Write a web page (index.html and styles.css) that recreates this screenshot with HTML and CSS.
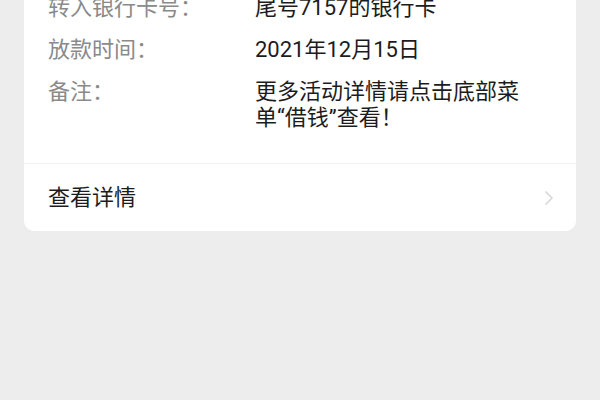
FILE: index.html
```html
<!DOCTYPE html>
<html lang="zh-CN">
<head>
<meta charset="utf-8">
<link rel="stylesheet" href="styles.css">
</head>
<body>
<div class="card">
  <div class="info">
    <div class="label">转入银行卡号：</div>
    <div class="value">尾号7157的银行卡</div>
    <div class="label">放款时间：</div>
    <div class="value">2021年12月15日</div>
    <div class="label">备注：</div>
    <div class="value">更多活动详情请点击底部菜单“借钱”查看！</div>
  </div>
  <div class="link">
    <span class="link-text">查看详情</span>
    <svg class="chev" width="10" height="16" viewBox="0 0 10 16"><path d="M1.5 1.5 L8 8 L1.5 14.5" fill="none" stroke="#d6d6d6" stroke-width="1.5"/></svg>
  </div>
</div>
</body>
</html>
```
FILE: styles.css
```css
html, body {
  margin: 0;
  padding: 0;
  background: #ededed;
  font-family: Roboto, "Noto Sans CJK SC", sans-serif;
}
.card {
  margin: -29px 24px 0 24px;
  background: #ffffff;
  border-radius: 10px;
}
.info {
  display: grid;
  grid-template-columns: 207px 276px;
  row-gap: 16px;
  padding: 24px 24px 32px 24px;
  font-size: 22px;
  line-height: 26px;
}
.label {
  color: #8a8a8a;
}
.value {
  color: #1c1c1c;
}
.link {
  border-top: 1px solid #f1f1f1;
  height: 67px;
  display: flex;
  align-items: center;
  justify-content: space-between;
  padding: 0 22px 0 24px;
}
.link-text {
  font-size: 22px;
  color: #1c1c1c;
  line-height: 26px;
}
.chev {
  display: block;
}
```
